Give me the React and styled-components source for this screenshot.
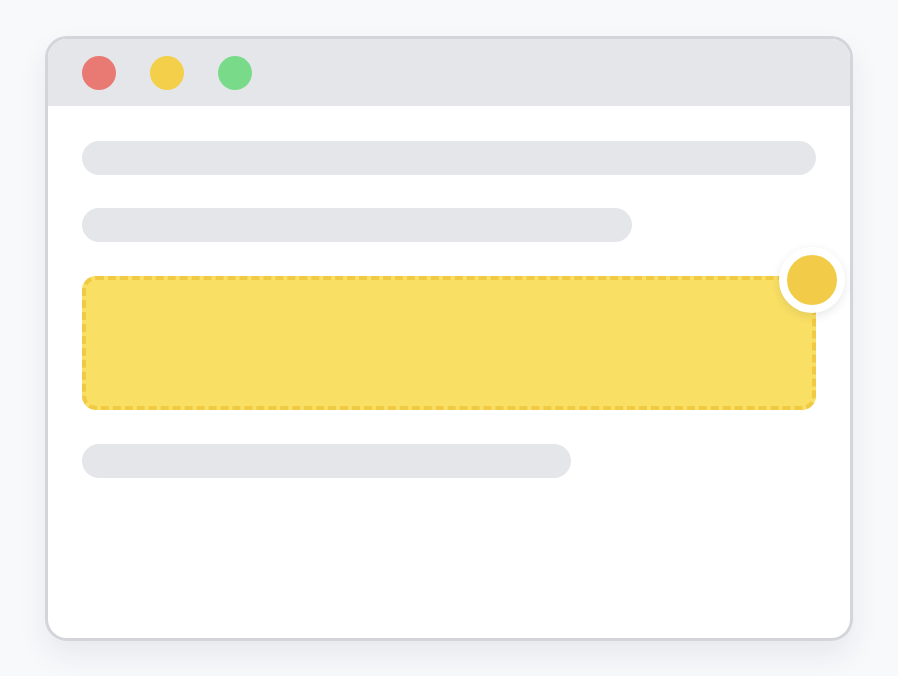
import React from "react";
import styled, { createGlobalStyle } from "styled-components";

const Global = createGlobalStyle`
  html, body { margin: 0; padding: 0; background: #f8f9fb; font-family: "Inter", sans-serif; }
  #root { width: 898px; height: 676px; }
`;

const Page = styled.div`
  width: 898px;
  height: 676px;
  box-sizing: border-box;
  padding: 36px 0 0 45px;
  background: #f8f9fb;
`;

const Window = styled.div`
  width: 808px;
  height: 605px;
  box-sizing: border-box;
  border: 3px solid #d3d5da;
  border-radius: 22px;
  background: #ffffff;
  box-shadow: 0 14px 30px rgba(30, 40, 60, 0.08);
  display: flex;
  flex-direction: column;
`;

const TitleBar = styled.div`
  height: 67px;
  flex: none;
  background: #e5e6ea;
  border-radius: 19px 19px 0 0;
  display: flex;
  align-items: center;
  gap: 34px;
  padding: 0 0 0 34px;
`;

const Dot = styled.span`
  width: 34px;
  height: 34px;
  border-radius: 50%;
  background: ${(p) => p.$color};
`;

const Content = styled.div`
  padding: 35px 34px 0 34px;
  display: flex;
  flex-direction: column;
  align-items: flex-start;
`;

const Bar = styled.div`
  height: 34px;
  width: ${(p) => p.$width}px;
  border-radius: 17px;
  background: #e5e6ea;
  margin-bottom: ${(p) => p.$gap || 0}px;
`;

const Highlight = styled.div`
  position: relative;
  width: 734px;
  height: 134px;
  box-sizing: border-box;
  border: 4px dashed #f1ca43;
  border-radius: 14px;
  background: #f9df63;
  margin-bottom: 34px;
`;

const Badge = styled.div`
  position: absolute;
  top: -33px;
  right: -33px;
  width: 50px;
  height: 50px;
  border-radius: 50%;
  background: #f2cc48;
  border: 8px solid #ffffff;
  box-shadow: 0 3px 10px rgba(30, 40, 60, 0.1);
`;

export default function App() {
  return (
    <>
      <Global />
      <Page>
        <Window>
          <TitleBar>
            <Dot $color="#e87a73" />
            <Dot $color="#f4cf4a" />
            <Dot $color="#79db8a" />
          </TitleBar>
          <Content>
            <Bar $width={734} $gap={33} />
            <Bar $width={550} $gap={34} />
            <Highlight>
              <Badge />
            </Highlight>
            <Bar $width={489} />
          </Content>
        </Window>
      </Page>
    </>
  );
}
